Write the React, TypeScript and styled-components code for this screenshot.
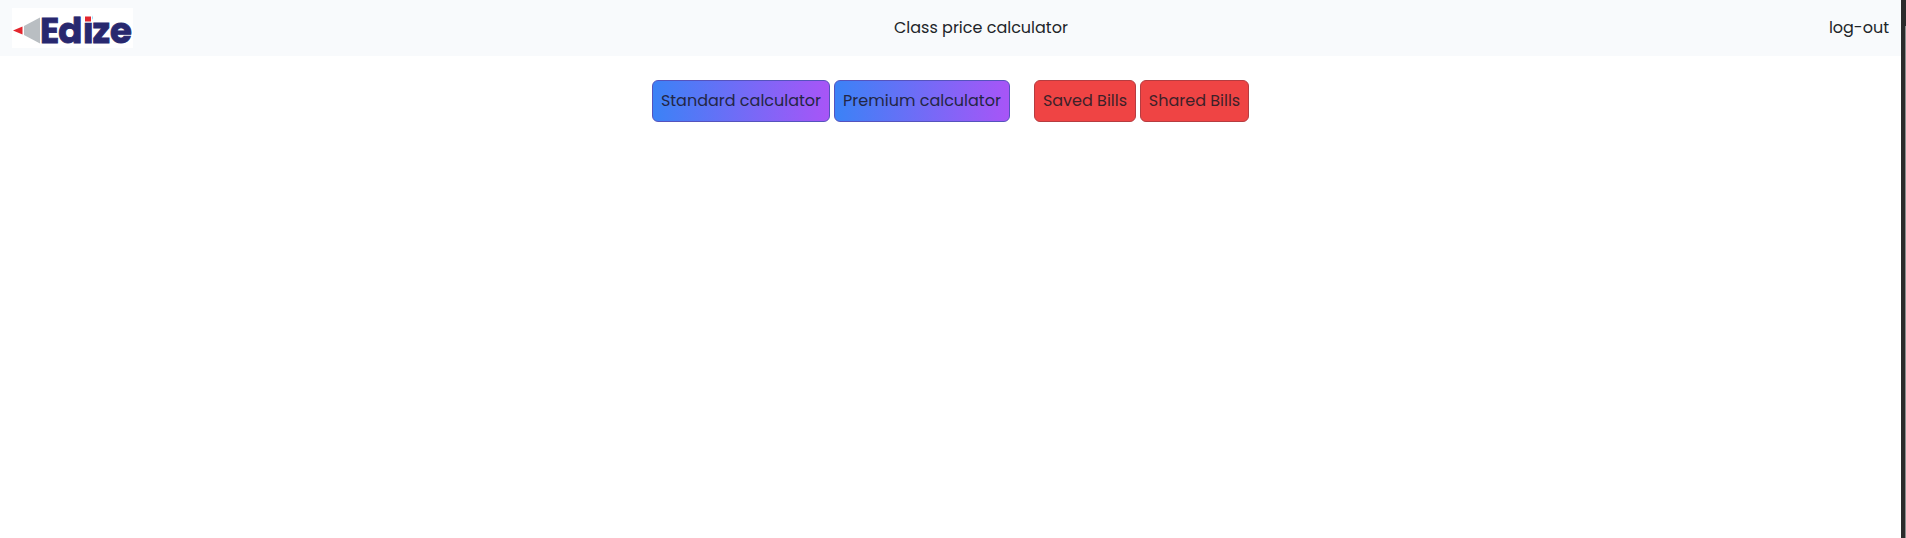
import React from "react";
import styled, { createGlobalStyle } from "styled-components";

const GlobalStyle = createGlobalStyle`
  * { box-sizing: border-box; }
  body {
    margin: 0;
    background: #fff;
    color: #212529;
    font-family: Poppins, Inter, "Liberation Sans", sans-serif;
    font-size: 16px;
    line-height: 24px;
    overflow: hidden;
  }
`;

const Window = styled.div`
  display: flex;
  height: 100vh;
`;

const Page = styled.div`
  flex: 1;
`;

const Edge = styled.div`
  width: 5px;
  padding: 26px 0 0 4px;
  background: #2b2b2b;
`;

const EdgeTrack = styled.div`
  height: 100%;
  background: #8c8c8c;
`;

const Header = styled.header`
  display: flex;
  justify-content: space-between;
  align-items: center;
  height: 56px;
  padding: 0 12px;
  background: #f8fafc;
`;

const Logo = styled.svg`
  display: block;
  width: 121px;
  height: 40px;
  overflow: visible;
`;

const LogoText = styled.text`
  font-size: 35.5px;
  font-weight: 700;
  fill: #28286f;
  stroke: #28286f;
  stroke-width: 0.9px;
`;

const Label = styled.span`
  white-space: nowrap;
`;

const Toolbar = styled.nav`
  display: flex;
  justify-content: center;
  gap: 24px;
  padding-top: 24px;
`;

const Group = styled.div`
  display: flex;
  gap: 4px;
`;

const Button = styled.button<{ $width: number; $kind: "calculator" | "bills" }>`
  width: ${(p) => p.$width}px;
  height: 42px;
  padding: 0 0 1px;
  border: 1px solid ${(p) => (p.$kind === "bills" ? "#b63c40" : "#5553bd")};
  border-radius: 6px;
  background: ${(p) =>
    p.$kind === "bills" ? "#ef4444" : "linear-gradient(to right, #3b82f6, #a855f7)"};
  color: ${(p) => (p.$kind === "bills" ? "#3d2129" : "#232645")};
  font: inherit;
  white-space: nowrap;
`;

export default function App() {
  return (
    <Window>
      <GlobalStyle />
      <Page>
        <Header>
          <Logo viewBox="0 0 121 40" role="img" aria-label="Edize">
            <rect width="121" height="40" fill="#fff" />
            <path d="M1 22.5 10.5 18.5v8z" fill="#e3262e" />
            <path d="M12 18 28 9.5v26L12 27z" fill="#b9bec2" />
            <LogoText x="28 46.3 71 80.5 98" y="35">Edize</LogoText>
            <rect x="71.8" y="5" width="8.6" height="9.5" fill="#fff" />
            <rect x="73" y="8.5" width="6" height="5" fill="#e3262e" />
          </Logo>
          <Label>Class price calculator</Label>
          <Label>log-out</Label>
        </Header>
        <Toolbar>
          <Group>
            <Button $width={178} $kind="calculator">Standard calculator</Button>
            <Button $width={176} $kind="calculator">Premium calculator</Button>
          </Group>
          <Group>
            <Button $width={102} $kind="bills">Saved Bills</Button>
            <Button $width={109} $kind="bills">Shared Bills</Button>
          </Group>
        </Toolbar>
      </Page>
      <Edge><EdgeTrack /></Edge>
    </Window>
  );
}
